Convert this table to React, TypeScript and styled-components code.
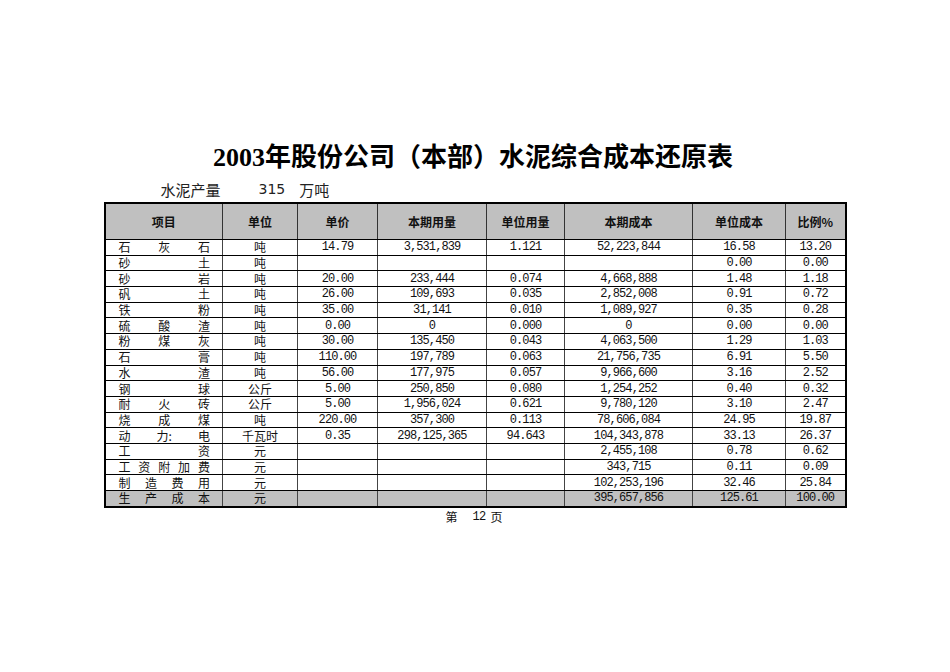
import styled, { createGlobalStyle } from "styled-components";

const GlobalStyle = createGlobalStyle`
  html, body {
    margin: 0;
    padding: 0;
    background: #ffffff;
  }
  body {
    font-family: "Noto Sans CJK SC", "Noto Sans", sans-serif;
    color: #111;
  }
`;

type Row = {
  label: string[];
  unit: string;
  price: string;
  qty: string;
  unitQty: string;
  cost: string;
  unitCost: string;
  ratio: string;
  total?: boolean;
};

// 成本还原表数据
const rows: Row[] = [
  { label: ["石", "灰", "石"], unit: "吨", price: "14.79", qty: "3,531,839", unitQty: "1.121", cost: "52,223,844", unitCost: "16.58", ratio: "13.20" },
  { label: ["砂", "土"], unit: "吨", price: "", qty: "", unitQty: "", cost: "", unitCost: "0.00", ratio: "0.00" },
  { label: ["砂", "岩"], unit: "吨", price: "20.00", qty: "233,444", unitQty: "0.074", cost: "4,668,888", unitCost: "1.48", ratio: "1.18" },
  { label: ["矾", "土"], unit: "吨", price: "26.00", qty: "109,693", unitQty: "0.035", cost: "2,852,008", unitCost: "0.91", ratio: "0.72" },
  { label: ["铁", "粉"], unit: "吨", price: "35.00", qty: "31,141", unitQty: "0.010", cost: "1,089,927", unitCost: "0.35", ratio: "0.28" },
  { label: ["硫", "酸", "渣"], unit: "吨", price: "0.00", qty: "0", unitQty: "0.000", cost: "0", unitCost: "0.00", ratio: "0.00" },
  { label: ["粉", "煤", "灰"], unit: "吨", price: "30.00", qty: "135,450", unitQty: "0.043", cost: "4,063,500", unitCost: "1.29", ratio: "1.03" },
  { label: ["石", "膏"], unit: "吨", price: "110.00", qty: "197,789", unitQty: "0.063", cost: "21,756,735", unitCost: "6.91", ratio: "5.50" },
  { label: ["水", "渣"], unit: "吨", price: "56.00", qty: "177,975", unitQty: "0.057", cost: "9,966,600", unitCost: "3.16", ratio: "2.52" },
  { label: ["钢", "球"], unit: "公斤", price: "5.00", qty: "250,850", unitQty: "0.080", cost: "1,254,252", unitCost: "0.40", ratio: "0.32" },
  { label: ["耐", "火", "砖"], unit: "公斤", price: "5.00", qty: "1,956,024", unitQty: "0.621", cost: "9,780,120", unitCost: "3.10", ratio: "2.47" },
  { label: ["烧", "成", "煤"], unit: "吨", price: "220.00", qty: "357,300", unitQty: "0.113", cost: "78,606,084", unitCost: "24.95", ratio: "19.87" },
  { label: ["动", "力:", "电"], unit: "千瓦时", price: "0.35", qty: "298,125,365", unitQty: "94.643", cost: "104,343,878", unitCost: "33.13", ratio: "26.37" },
  { label: ["工", "资"], unit: "元", price: "", qty: "", unitQty: "", cost: "2,455,108", unitCost: "0.78", ratio: "0.62" },
  { label: ["工", "资", "附", "加", "费"], unit: "元", price: "", qty: "", unitQty: "", cost: "343,715", unitCost: "0.11", ratio: "0.09" },
  { label: ["制", "造", "费", "用"], unit: "元", price: "", qty: "", unitQty: "", cost: "102,253,196", unitCost: "32.46", ratio: "25.84" },
  { label: ["生", "产", "成", "本"], unit: "元", price: "", qty: "", unitQty: "", cost: "395,657,856", unitCost: "125.61", ratio: "100.00", total: true },
];

const headers = ["项目", "单位", "单价", "本期用量", "单位用量", "本期成本", "单位成本", "比例%"];
const widths = [118, 75, 80, 109, 78, 128, 93, 60];

export default function App() {
  return (
    <>
      <GlobalStyle />
      <Page>
        <Title>2003年股份公司（本部）水泥综合成本还原表</Title>
        <SubTitle>
          <SubLabel>水泥产量</SubLabel>
          <SubNumber>315</SubNumber>
          <SubLabel>万吨</SubLabel>
        </SubTitle>
        <Table>
          <colgroup>
            {widths.map((w, i) => (
              <col key={i} style={{ width: w }} />
            ))}
          </colgroup>
          <thead>
            <tr>
              {headers.map((h) => (
                <HeadCell key={h}>{h}</HeadCell>
              ))}
            </tr>
          </thead>
          <tbody>
            {rows.map((r, i) => (
              <DataRow key={i} $total={!!r.total}>
                <LabelCell>
                  <Spread>
                    {r.label.map((c, j) => (
                      <span key={j}>{c}</span>
                    ))}
                  </Spread>
                </LabelCell>
                <UnitCell>{r.unit}</UnitCell>
                <NumCell>{r.price}</NumCell>
                <NumCell>{r.qty}</NumCell>
                <NumCell>{r.unitQty}</NumCell>
                <NumCell>{r.cost}</NumCell>
                <NumCell>{r.unitCost}</NumCell>
                <NumCell>{r.ratio}</NumCell>
              </DataRow>
            ))}
          </tbody>
        </Table>
        <Footer>
          <FootText>第</FootText>
          <FootNum>12</FootNum>
          <FootText>页</FootText>
        </Footer>
      </Page>
    </>
  );
}

const Page = styled.div`
  width: 950px;
  height: 672px;
  padding-top: 140px;
  box-sizing: border-box;
  display: flex;
  flex-direction: column;
  align-items: center;
`;

const Title = styled.h1`
  margin: 0;
  height: 36px;
  line-height: 36px;
  font-family: "Liberation Serif", "Noto Sans CJK SC", serif;
  font-size: 26px;
  font-weight: 700;
  color: #000;
  white-space: nowrap;
  margin-left: -4px;
`;

const SubTitle = styled.div`
  width: 741px;
  height: 26px;
  display: flex;
  align-items: center;
  padding-left: 56px;
  box-sizing: border-box;
  color: #222;
`;

const SubLabel = styled.span`
  font-family: "Noto Sans CJK SC", sans-serif;
  font-size: 15px;
  font-weight: 400;
`;

const SubNumber = styled.span`
  font-family: "DejaVu Sans", sans-serif;
  font-size: 14px;
  margin: 0 14px 0 38px;
`;

const Table = styled.table`
  width: 741px;
  border-collapse: collapse;
  table-layout: fixed;
  border: 2px solid #000;
`;

const HeadCell = styled.th`
  height: 35px;
  padding: 0;
  background: #c0c0c0;
  border: 1px solid #333;
  border-bottom-color: #000;
  font-family: "Noto Sans CJK SC", sans-serif;
  font-size: 12px;
  font-weight: 700;
  color: #111;
  text-align: center;
`;

const DataRow = styled.tr<{ $total: boolean }>`
  background: ${(p) => (p.$total ? "#c0c0c0" : "#ffffff")};
`;

const Cell = styled.td`
  padding: 0;
  height: 14.7px;
  line-height: 14px;
  border-left: 1px solid #444;
  border-right: 1px solid #444;
  border-top: 1px solid #000;
  border-bottom: 1px solid #000;
  white-space: nowrap;
  overflow: hidden;
`;

const LabelCell = styled(Cell)`
  padding: 0 12px 0 13px;
  font-family: "Noto Sans CJK SC", sans-serif;
  font-size: 12px;
  color: #111;
`;

const Spread = styled.div`
  display: flex;
  justify-content: space-between;
  height: 14px;
`;

const UnitCell = styled(Cell)`
  text-align: center;
  font-family: "Noto Sans CJK SC", sans-serif;
  font-size: 12px;
  color: #111;
`;

const NumCell = styled(Cell)`
  text-align: center;
  font-family: "Liberation Mono", monospace;
  font-size: 12px;
  letter-spacing: -0.9px;
  color: #111;
`;

const Footer = styled.div`
  display: flex;
  align-items: center;
  height: 18px;
  margin-left: -2px;
  font-size: 12px;
  color: #111;
`;

const FootText = styled.span`
  font-family: "Noto Sans CJK SC", sans-serif;
`;

const FootNum = styled.span`
  font-family: "Liberation Mono", monospace;
  letter-spacing: -0.6px;
  margin: 0 5px 0 15px;
`;
